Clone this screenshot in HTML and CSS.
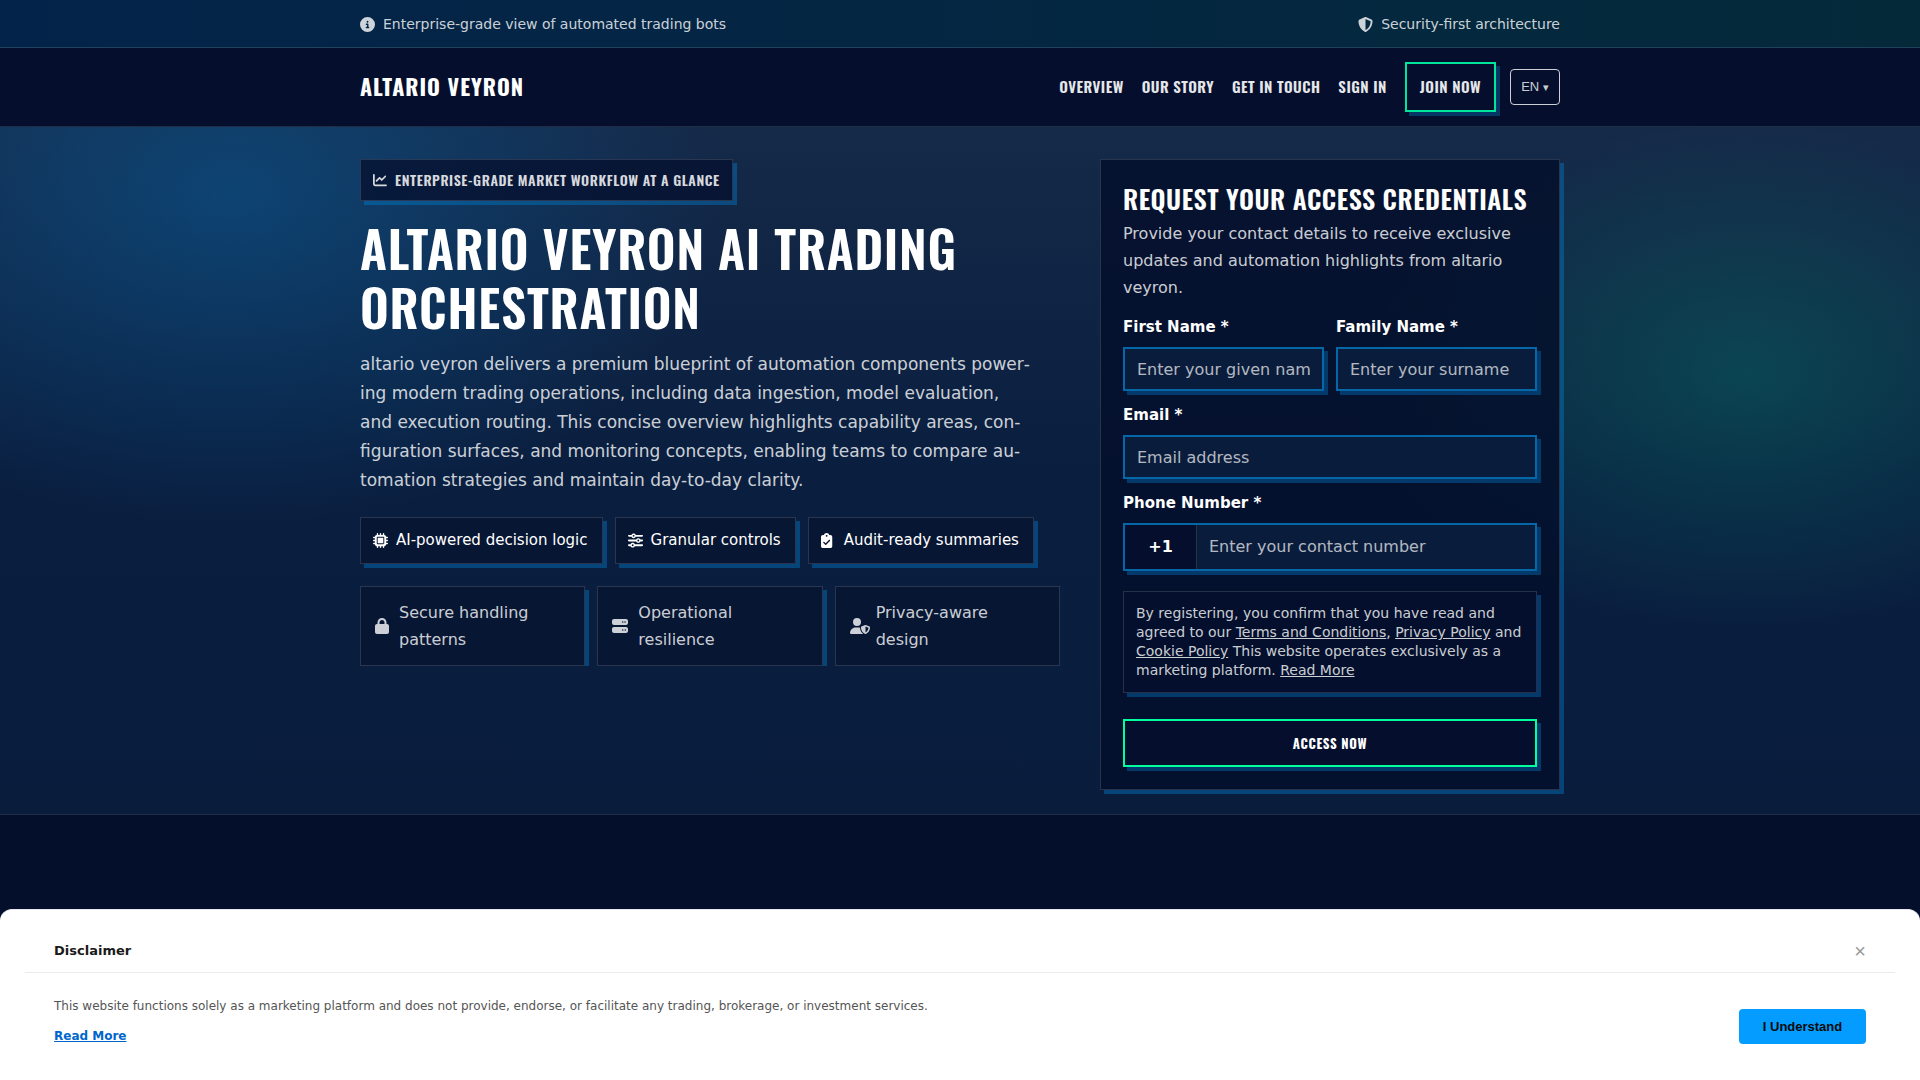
FILE: index.html
```html
<!DOCTYPE html>
<html lang="en">
<head>
<meta charset="utf-8">
<title>Altario Veyron</title>
<link rel="stylesheet" href="styles.css">
</head>
<body>
<svg class="sprite" aria-hidden="true">
  <symbol id="i-info" viewBox="0 0 512 512"><path d="M256 512A256 256 0 1 0 256 0a256 256 0 1 0 0 512zM216 336h24V272H216c-13.300 0-24-10.700-24-24s10.700-24 24-24h48c13.300 0 24 10.700 24 24v88h8c13.300 0 24 10.700 24 24s-10.700 24-24 24H216c-13.300 0-24-10.700-24-24s10.700-24 24-24zm40-208a32 32 0 1 1 0 64 32 32 0 1 1 0-64z"/></symbol>
  <symbol id="i-shield" viewBox="0 0 512 512"><path d="M256 0c4.600 0 9.200 1 13.400 2.900L457.700 82.800c22 9.300 38.400 31 38.300 57.200c-.5 99.200-41.300 280.700-213.600 363.200c-16.700 8-36.100 8-52.800 0C57.300 420.700 16.500 239.200 16 140c-.1-26.200 16.300-47.900 38.300-57.200L242.700 2.900C246.800 1 251.400 0 256 0zm0 66.800V444.800C394 378 431.100 230.100 432 141.400L256 66.800z"/></symbol>
  <symbol id="i-chart" viewBox="0 0 512 512"><path d="M64 64c0-17.700-14.300-32-32-32S0 46.300 0 64V400c0 44.200 35.800 80 80 80H480c17.700 0 32-14.300 32-32s-14.300-32-32-32H80c-8.800 0-16-7.200-16-16V64zm406.600 86.600c12.500-12.500 12.500-32.800 0-45.300s-32.800-12.500-45.300 0L320 210.700l-57.400-57.400c-12.500-12.500-32.800-12.500-45.300 0l-112 112c-12.500 12.500-12.500 32.800 0 45.300s32.800 12.500 45.300 0L240 221.300l57.400 57.400c12.500 12.500 32.800 12.500 45.300 0l128-128z"/></symbol>
  <symbol id="i-chip" viewBox="0 0 512 512"><path d="M176 24c0-13.300-10.700-24-24-24s-24 10.700-24 24V64c-35.300 0-64 28.700-64 64H24c-13.300 0-24 10.700-24 24s10.700 24 24 24H64v56H24c-13.300 0-24 10.700-24 24s10.700 24 24 24H64v56H24c-13.300 0-24 10.700-24 24s10.700 24 24 24H64c0 35.300 28.700 64 64 64v40c0 13.300 10.700 24 24 24s24-10.700 24-24V448h56v40c0 13.300 10.700 24 24 24s24-10.700 24-24V448h56v40c0 13.300 10.700 24 24 24s24-10.700 24-24V448c35.300 0 64-28.700 64-64h40c13.300 0 24-10.700 24-24s-10.700-24-24-24H448V280h40c13.300 0 24-10.700 24-24s-10.700-24-24-24H448V176h40c13.300 0 24-10.700 24-24s-10.700-24-24-24H448c0-35.300-28.700-64-64-64V24c0-13.300-10.700-24-24-24s-24 10.700-24 24V64H280V24c0-13.300-10.700-24-24-24s-24 10.700-24 24V64H176V24zM160 128H352c17.700 0 32 14.300 32 32V352c0 17.700-14.300 32-32 32H160c-17.700 0-32-14.300-32-32V160c0-17.700 14.300-32 32-32zm192 32H160V352H352V160z"/></symbol>
  <symbol id="i-sliders" viewBox="0 0 512 512"><path d="M0 416c0 17.700 14.300 32 32 32l54.700 0c12.300 28.300 40.500 48 73.300 48s61-19.700 73.300-48L480 448c17.700 0 32-14.300 32-32s-14.300-32-32-32l-246.700 0c-12.300-28.300-40.500-48-73.300-48s-61 19.700-73.300 48L32 384c-17.700 0-32 14.300-32 32zm128 0a32 32 0 1 1 64 0 32 32 0 1 1 -64 0zM320 256a32 32 0 1 1 64 0 32 32 0 1 1 -64 0zm32-80c-32.800 0-61 19.700-73.300 48L32 224c-17.700 0-32 14.300-32 32s14.300 32 32 32l246.700 0c12.300 28.300 40.500 48 73.300 48s61-19.700 73.300-48l54.700 0c17.700 0 32-14.300 32-32s-14.300-32-32-32l-54.700 0c-12.300-28.300-40.500-48-73.300-48zM192 128a32 32 0 1 1 0-64 32 32 0 1 1 0 64zm73.300-64C253 35.700 224.800 16 192 16s-61 19.700-73.300 48L32 64C14.300 64 0 78.300 0 96s14.300 32 32 32l86.700 0c12.300 28.300 40.500 48 73.300 48s61-19.700 73.300-48L480 128c17.700 0 32-14.300 32-32s-14.300-32-32-32L265.300 64z"/></symbol>
  <symbol id="i-clipboard" viewBox="0 0 384 512" preserveAspectRatio="xMinYMid meet"><path d="M192 0c-41.800 0-77.400 26.700-90.500 64H64C28.700 64 0 92.700 0 128V448c0 35.300 28.700 64 64 64H320c35.300 0 64-28.700 64-64V128c0-35.300-28.700-64-64-64H282.500C269.400 26.700 233.800 0 192 0zm0 64a32 32 0 1 1 0 64 32 32 0 1 1 0-64zM305 273L177 401c-9.400 9.400-24.600 9.400-33.900 0L79 337c-9.400-9.400-9.400-24.600 0-33.900s24.600-9.400 33.900 0l47 47L271 239c9.400-9.400 24.600-9.400 33.900 0s9.400 24.600 0 33.900z"/></symbol>
  <symbol id="i-lock" viewBox="0 0 448 512"><path d="M144 144v48H304V144c0-44.200-35.800-80-80-80s-80 35.800-80 80zM80 192V144C80 64.500 144.500 0 224 0s144 64.500 144 144v48h16c35.300 0 64 28.700 64 64V448c0 35.300-28.700 64-64 64H64c-35.300 0-64-28.700-64-64V256c0-35.300 28.700-64 64-64H80z"/></symbol>
  <symbol id="i-server" viewBox="0 0 512 512"><path d="M64 32C28.700 32 0 60.700 0 96v64c0 35.300 28.700 64 64 64H448c35.300 0 64-28.700 64-64V96c0-35.300-28.700-64-64-64H64zm280 72a24 24 0 1 1 0 48 24 24 0 1 1 0-48zm48 24a24 24 0 1 1 48 0 24 24 0 1 1 -48 0zM64 288c-35.300 0-64 28.700-64 64v64c0 35.300 28.700 64 64 64H448c35.300 0 64-28.700 64-64V352c0-35.300-28.700-64-64-64H64zm280 72a24 24 0 1 1 0 48 24 24 0 1 1 0-48zm56 24a24 24 0 1 1 48 0 24 24 0 1 1 -48 0z"/></symbol>
  <symbol id="i-user" viewBox="0 0 640 512"><path d="M224 256A128 128 0 1 0 224 0a128 128 0 1 0 0 256zm-45.700 48C79.800 304 0 383.800 0 482.300C0 498.700 13.300 512 29.700 512H418.300c1.800 0 3.500-.2 5.300-.5c-76.300-55.100-99.800-141-103.100-200.200c-16.100-4.800-33.100-7.300-50.700-7.300H178.300zm308.800-78.300l-120 48C358 277.400 352 286.200 352 296c0 63.300 25.900 168.800 134.800 214.200c5.900 2.500 12.600 2.500 18.500 0C614.100 464.800 640 359.300 640 296c0-9.800-6-18.600-15.100-22.300l-120-48c-5.700-2.300-12.100-2.300-17.800 0zM591.400 312c-3.900 50.700-27.200 116.700-95.400 149.700V273.800L591.400 312z"/></symbol>
</svg>

<div class="topbar">
  <div class="container topbar-row">
    <span class="note"><svg class="icon icon-15"><use href="#i-info"/></svg>Enterprise-grade view of automated trading bots</span>
    <span class="note"><svg class="icon icon-15"><use href="#i-shield"/></svg>Security-first architecture</span>
  </div>
</div>

<header class="header">
  <div class="container header-row">
    <a class="brand" href="#">ALTARIO VEYRON</a>
    <nav class="nav">
      <a href="#">OVERVIEW</a>
      <a href="#">OUR STORY</a>
      <a href="#">GET IN TOUCH</a>
      <a href="#">SIGN IN</a>
      <a class="join" href="#">JOIN NOW</a>
      <button class="lang" type="button">EN <span class="caret">▾</span></button>
    </nav>
  </div>
</header>

<main>
  <section class="hero">
    <div class="container hero-grid">
      <div class="intro">
        <p class="badge"><svg class="icon icon-14"><use href="#i-chart"/></svg>ENTERPRISE-GRADE MARKET WORKFLOW AT A GLANCE</p>
        <h1 class="title">ALTARIO VEYRON AI TRADING ORCHESTRATION</h1>
        <p class="lead">altario veyron delivers a premium blueprint of automation components power&shy;ing modern trading operations, including data ingestion, model evaluation, and execution routing. This concise overview highlights capability areas, con&shy;figuration surfaces, and monitoring concepts, enabling teams to compare au&shy;tomation strategies and maintain day-to-day clarity.</p>
        <ul class="chips">
          <li class="chip"><svg class="icon icon-15"><use href="#i-chip"/></svg>AI-powered decision logic</li>
          <li class="chip"><svg class="icon icon-15"><use href="#i-sliders"/></svg>Granular controls</li>
          <li class="chip"><svg class="icon icon-15"><use href="#i-clipboard"/></svg>Audit-ready summaries</li>
        </ul>
        <ul class="features">
          <li class="feature"><svg class="icon icon-lock"><use href="#i-lock"/></svg><span>Secure handling patterns</span></li>
          <li class="feature"><svg class="icon"><use href="#i-server"/></svg><span>Operational resilience</span></li>
          <li class="feature"><svg class="icon icon-user"><use href="#i-user"/></svg><span>Privacy-aware design</span></li>
        </ul>
      </div>

      <form class="card">
        <h2 class="card-title">REQUEST YOUR ACCESS CREDENTIALS</h2>
        <p class="card-text">Provide your contact details to receive exclusive updates and automation highlights from altario veyron.</p>
        <div class="names">
          <div class="field"><label for="first">First Name *</label><input class="box" id="first" type="text" placeholder="Enter your given name"></div>
          <div class="field"><label for="family">Family Name *</label><input class="box" id="family" type="text" placeholder="Enter your surname"></div>
        </div>
        <div class="field"><label for="email">Email *</label><input class="box" id="email" type="email" placeholder="Email address"></div>
        <div class="field">
          <label for="phone">Phone Number *</label>
          <div class="phone"><span class="code">+1</span><input id="phone" type="tel" placeholder="Enter your contact number"></div>
        </div>
        <p class="consent">By registering, you confirm that you have read and agreed to our <a href="#">Terms and Conditions</a>, <a href="#">Privacy Policy</a> and <a href="#">Cookie Policy</a> This website operates exclusively as a marketing platform. <a href="#">Read More</a></p>
        <button class="submit" type="submit">ACCESS NOW</button>
      </form>
    </div>
  </section>
</main>

<aside class="disclaimer">
  <div class="disclaimer-head">
    <strong>Disclaimer</strong>
    <button class="close" type="button" aria-label="Close">×</button>
  </div>
  <div class="disclaimer-body">
    <div class="disclaimer-text">
      <p>This website functions solely as a marketing platform and does not provide, endorse, or facilitate any trading, brokerage, or investment services.</p>
      <a href="#">Read More</a>
    </div>
    <button class="accept" type="button">I Understand</button>
  </div>
</aside>
</body>
</html>
```
FILE: styles.css
```css
:root {
  --head: Oswald, "Liberation Sans Narrow", sans-serif;
  --line: rgba(255, 255, 255, 0.14);
  --soft: rgba(255, 255, 255, 0.8);
  --drop: 4px 4px 0 rgba(0, 133, 217, 0.38);
}

* { box-sizing: border-box; }

body {
  margin: 0;
  min-height: 100vh;
  background: #040f2b;
  color: #fff;
  font: 16px/27px "DejaVu Sans", sans-serif;
  overflow: hidden;
}

h1, h2, p, ul { margin: 0; padding: 0; }
ul { list-style: none; }
a { color: inherit; }

.sprite { position: absolute; width: 0; height: 0; }

.icon { flex: none; width: 16px; height: 16px; fill: currentColor; }
.icon-14 { width: 14px; height: 14px; }
.icon-15 { width: 15px; height: 15px; }
.icon-lock { width: 14px; }
.icon-user { width: 20px; margin-right: -4px; }

.container { width: 100%; max-width: 1200px; margin: 0 auto; }

.topbar {
  background: linear-gradient(90deg, #04234a, #042a3a);
  border-bottom: 1px solid #21425a;
  color: var(--soft);
  font-size: 14px;
  line-height: 24px;
}
.topbar-row { display: flex; justify-content: space-between; padding: 12px 0 11px; }
.note { display: flex; align-items: center; gap: 8px; }

.header { background: #050f2d; border-bottom: 1px solid #212c46; }
.header-row { display: flex; align-items: center; justify-content: space-between; padding: 14px 0; }
.brand { padding-bottom: 2px; font: 700 22px/32px var(--head); text-decoration: none; letter-spacing: 1px; }
.nav { display: flex; align-items: center; gap: 18px; font: 600 15px/24px var(--head); letter-spacing: 0.03em; }
.nav a { padding-bottom: 2px; color: #e6e7ea; text-decoration: none; }
.nav .join {
  padding: 10px 13px 12px;
  border: 2px solid #00e599;
  box-shadow: 4px 4px 0 #043766;
}
.lang {
  margin-left: -4px;
  width: 50px;
  height: 36px;
  padding: 0;
  background: none;
  border: 1px solid var(--soft);
  border-radius: 4px;
  color: var(--soft);
  font: 13px/16px "Liberation Sans", Arial, sans-serif;
}
.caret { font-size: 11px; }

.hero {
  padding: 32px 0 24px;
  border-bottom: 1px solid #212c46;
  background:
    radial-gradient(500px 330px at 12% 10%, rgba(0, 133, 217, 0.3), transparent),
    radial-gradient(400px 260px at 91% 36%, rgba(0, 229, 153, 0.18), transparent),
    linear-gradient(180deg, #152948 0%, #0a1f40 50%, #091c3c 100%);
}
.hero-grid { display: grid; grid-template-columns: 700fr 460fr; gap: 40px; align-items: start; }

.badge {
  display: flex;
  align-items: center;
  gap: 8px;
  width: fit-content;
  padding: 8px 12px;
  border: 1px solid var(--line);
  background: rgba(5, 15, 45, 0.75);
  box-shadow: var(--drop);
  color: #d7d9de;
  font: 600 14px/24px var(--head);
  letter-spacing: 0.04em;
}
.title { margin-top: 17px; font: 600 50px/59px var(--head); letter-spacing: 0.015em; }
.lead { max-width: 672px; margin-top: 14px; color: var(--soft); font-size: 17px; line-height: 29px; }

.chips { display: flex; flex-wrap: wrap; gap: 12px; margin-top: 22px; }
.chip {
  display: flex;
  align-items: center;
  gap: 8px;
  padding: 10px 14px 10px 12px;
  border: 1px solid var(--line);
  background: #071633;
  box-shadow: var(--drop);
  font-size: 15px;
  line-height: 25px;
}

.features { display: grid; grid-template-columns: repeat(3, 1fr); gap: 12px; margin-top: 22px; overflow: hidden; }
.feature {
  display: flex;
  align-items: center;
  gap: 10px;
  padding: 12px 14px;
  border: 1px solid var(--line);
  background: #071633;
  box-shadow: var(--drop);
  color: var(--soft);
}

.card {
  padding: 22px;
  border: 1px solid var(--line);
  background: rgba(4, 15, 43, 0.82);
  box-shadow: var(--drop);
}
.card-title { margin-bottom: 4px; font: 600 26px/34px var(--head); letter-spacing: 0.02em; }
.card-text { margin-bottom: 13px; color: var(--soft); }
.names { display: grid; grid-template-columns: 1fr 1fr; gap: 12px; }
.field { display: flex; flex-direction: column; gap: 6px; margin-bottom: 11px; }
.field label { font-size: 15px; font-weight: 700; line-height: 27px; }

input {
  min-width: 0;
  width: 100%;
  margin: 0;
  border: 0;
  border-radius: 0;
  background: #0a1c3b;
  color: #fff;
  font: 16px/20px "DejaVu Sans", sans-serif;
}
input::placeholder { color: rgba(255, 255, 255, 0.7); opacity: 1; }
.box { height: 44px; padding: 0 12px; border: 2px solid #0567a8; box-shadow: 4px 4px 0 #043a6b; }
.phone { display: flex; height: 48px; border: 2px solid #0567a8; box-shadow: 4px 4px 0 #043a6b; }
.phone input { padding: 0 12px; }
.code {
  flex: none;
  width: 72px;
  border-right: 1px solid var(--line);
  background: #050f2d;
  font-weight: 700;
  line-height: 44px;
  text-align: center;
}

.consent {
  margin-top: 20px;
  padding: 12px;
  border: 1px solid var(--line);
  background: #030f2c;
  box-shadow: 4px 4px 0 #043a6b;
  color: var(--soft);
  font-size: 14px;
  line-height: 19px;
}
.submit {
  width: 100%;
  height: 48px;
  margin-top: 26px;
  border: 2px solid #00ff9d;
  background: #050f2d;
  box-shadow: 4px 4px 0 #043a6b;
  color: #fff;
  font: 700 13px/20px var(--head);
  letter-spacing: 0.05em;
}

.disclaimer {
  position: fixed;
  right: 0;
  bottom: 0;
  left: 0;
  padding: 24px 25px 33px;
  border-top: 1px solid #e8e8ee;
  border-radius: 12px 12px 0 0;
  background: #fff;
  color: #1a1a1a;
}
.disclaimer-head {
  display: flex;
  align-items: center;
  justify-content: space-between;
  padding: 4px 29px 9px;
  border-bottom: 1px solid #ebebeb;
  font-size: 13px;
  line-height: 25px;
}
.close { padding: 0; border: 0; background: none; color: #999; font: 20px/20px "Liberation Sans", Arial, sans-serif; }
.disclaimer-body {
  display: flex;
  align-items: flex-end;
  justify-content: space-between;
  padding: 22px 29px 0;
  font-size: 12px;
  line-height: 22px;
}
.disclaimer-text p { margin-bottom: 8px; color: #555; }
.disclaimer-text a { color: #06c; font-weight: 700; }
.accept {
  width: 127px;
  height: 35px;
  margin-bottom: 3px;
  border: 0;
  border-radius: 4px;
  background: #049dff;
  color: #0a0a0a;
  font: 700 13px/20px "Liberation Sans", Arial, sans-serif;
}
```
